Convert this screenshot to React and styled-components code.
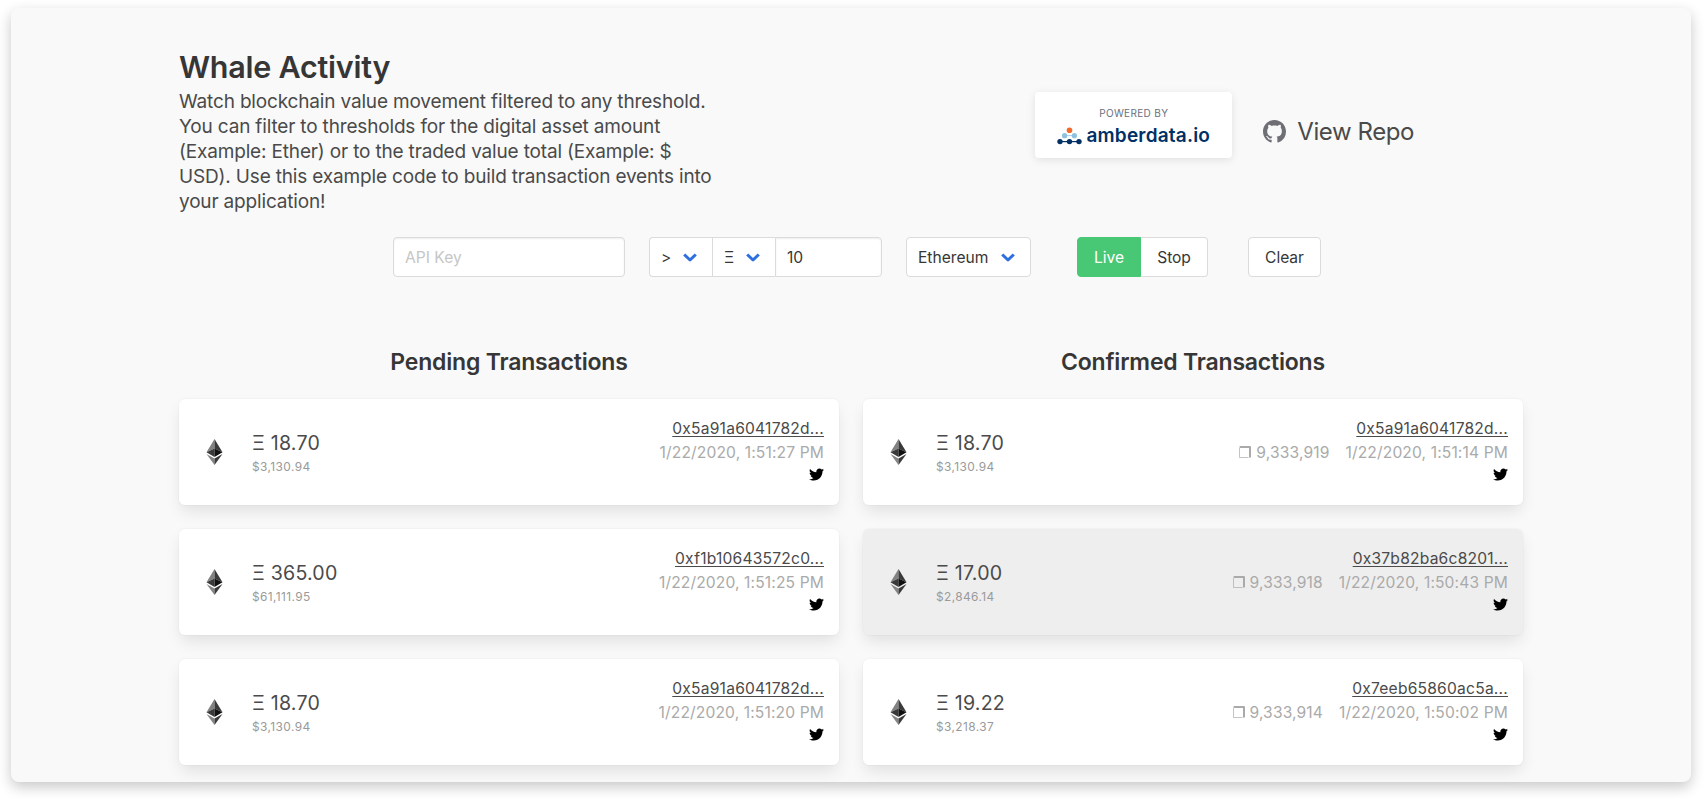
import React from 'react';
import styled, { createGlobalStyle } from 'styled-components';
import { FaTwitter } from 'react-icons/fa';

const GlobalStyle = createGlobalStyle`
  *, *::before, *::after { box-sizing: border-box; }
  body {
    margin: 0;
    background: #fff;
    color: #4a4a4a;
    font-family: Inter, 'Liberation Sans', sans-serif;
    overflow: hidden;
  }
  h1, h2, p { margin: 0; }
`;

const Page = styled.div`
  height: 798px;
  padding: 8px 13px 16px 11px;
`;

const Frame = styled.main`
  height: 774px;
  padding: 41px 168px 0;
  border-radius: 8px;
  background: #f9f9f9;
  box-shadow: 0 5px 14px rgba(0, 0, 0, 0.22);
`;

const Header = styled.header`
  display: flex;
  justify-content: space-between;
  height: 165px;
`;

const Intro = styled.div`
  width: 546px;
`;

const Title = styled.h1`
  margin-bottom: 4px;
  color: #363636;
  font-size: 30.5px;
  font-weight: 600;
  line-height: 36px;
  letter-spacing: -0.24px;
`;

const Lead = styled.p`
  font-size: 19px;
  line-height: 25px;
  letter-spacing: -0.165px;
`;

const Links = styled.div`
  display: flex;
  align-items: center;
  gap: 31px;
  height: 66px;
  margin: 43px 109px 0 0;
`;

const Badge = styled.div`
  display: flex;
  flex-direction: column;
  align-items: center;
  width: 197px;
  height: 66px;
  padding-top: 14px;
  border-radius: 4px;
  background: #fff;
  box-shadow: 0 2px 8px rgba(0, 0, 0, 0.1);
`;

const BadgeCaption = styled.span`
  color: #6b7080;
  font-size: 10px;
  line-height: 14px;
  letter-spacing: 0.35px;
`;

const Brand = styled.div`
  display: flex;
  align-items: center;
  gap: 4px;
  margin-top: 4px;
  color: #003064;
  font-size: 19px;
  font-weight: 600;
  line-height: 24px;
  letter-spacing: 0.2px;
`;

const RepoLink = styled.a`
  display: flex;
  align-items: center;
  gap: 11px;
  margin-top: 13px;
  font-size: 24px;
  line-height: 30px;
  letter-spacing: -0.42px;
  svg { color: #6e6f75; }
`;

const Controls = styled.form`
  display: flex;
  height: 40px;
  margin: 23px 0 0 214px;
  color: #363636;
  font-size: 15.6px;
`;

const Input = styled.input`
  width: ${(p) => p.$width}px;
  height: 40px;
  padding: 0 11px;
  border: 1px solid #dbdbdb;
  border-radius: ${(p) => (p.$joined ? '0 4px 4px 0' : '4px')};
  background: #fff;
  box-shadow: inset 0 1px 2px rgba(10, 10, 10, 0.07);
  color: #363636;
  font: inherit;
  &::placeholder { color: #c6c6c6; opacity: 1; }
`;

const Group = styled.div`
  display: flex;
  margin: 0 24px;
`;

const Picker = styled.div`
  display: flex;
  align-items: center;
  justify-content: space-between;
  width: ${(p) => p.$width}px;
  height: 40px;
  padding: 0 15px 0 11px;
  border: 1px solid #dbdbdb;
  border-right-width: ${(p) => (p.$joined ? 0 : '1px')};
  border-radius: ${(p) => p.$radius || '4px'};
  background: #fff;
`;

const Button = styled.button`
  width: ${(p) => p.$width}px;
  height: 40px;
  padding: 0;
  border: 1px solid ${(p) => (p.$active ? '#48c774' : '#dbdbdb')};
  border-left-width: ${(p) => (p.$joined ? 0 : '1px')};
  border-radius: ${(p) => p.$radius || '4px'};
  background: ${(p) => (p.$active ? '#48c774' : '#fff')};
  color: ${(p) => (p.$active ? '#fff' : '#363636')};
  font: inherit;
  letter-spacing: -0.05px;
`;

const Toggle = styled.div`
  display: flex;
  margin: 0 40px 0 46px;
`;

const Columns = styled.div`
  display: grid;
  grid-template-columns: 660px 660px;
  gap: 24px;
  margin-top: 70px;
`;

const Column = styled.section`
  display: flex;
  flex-direction: column;
  gap: 24px;
`;

const ColumnTitle = styled.h2`
  margin-bottom: -2px;
  color: #363636;
  font-size: 23px;
  font-weight: 600;
  line-height: 30px;
  letter-spacing: -0.19px;
  text-align: center;
`;

const Card = styled.article`
  display: flex;
  align-items: center;
  height: 106px;
  padding: 0 15px 0 26.5px;
  border-radius: 6px;
  background: ${(p) => (p.$muted ? '#eeeeee' : '#fff')};
  box-shadow: 0 8px 16px -2px rgba(10, 10, 10, 0.1), 0 0 0 1px rgba(10, 10, 10, 0.02);
`;

const Value = styled.div`
  flex: 1;
  margin-left: 29.5px;
  padding-top: 1px;
`;

const Amount = styled.div`
  font-size: 19.6px;
  line-height: 28px;
  letter-spacing: 0.2px;
`;

const Fiat = styled.div`
  color: #9a9a9a;
  font-size: 11.9px;
  line-height: 19px;
  letter-spacing: 0.4px;
`;

const Details = styled.div`
  display: flex;
  flex-direction: column;
  align-items: flex-end;
  align-self: flex-start;
  padding-top: 18px;
  font-size: 15.6px;
  line-height: 24px;
  letter-spacing: 0.13px;
`;

const Hash = styled.a`
  letter-spacing: 0.22px;
  text-decoration: underline;
  text-decoration-thickness: 1px;
  text-underline-offset: 2px;
`;

const Meta = styled.div`
  display: flex;
  gap: 16px;
  color: #aaa;
`;

const Block = styled.span`
  display: flex;
  align-items: center;
  gap: 5px;
  svg { margin-bottom: 2px; }
`;

const TwitterIcon = styled(FaTwitter)`
  margin-top: 2px;
  color: #000;
`;

const Chevron = () => (
  <svg width="14" height="9" viewBox="0 0 14 9" fill="none" stroke="#2e6fe0" strokeWidth="3" strokeLinejoin="round">
    <path d="M1.200 1.500L7 7l5.800-5.500" />
  </svg>
);

const EtherIcon = () => (
  <svg width="17" height="26" viewBox="0 0 17 26">
    <path d="M8.5 0L.5 13.2 8.5 9.6z" fill="#828282" />
    <path d="M8.5 0v9.6l8 3.6z" fill="#3a3a3a" />
    <path d="M.5 13.2l8-3.6v8.3z" fill="#393939" />
    <path d="M16.5 13.2l-8-3.6v8.3z" fill="#101010" />
    <path d="M.5 14.9l8 4.7V26z" fill="#858585" />
    <path d="M16.5 14.9l-8 4.7V26z" fill="#3a3a3a" />
  </svg>
);

const BlockIcon = () => (
  <svg width="12" height="12" viewBox="0 0 12 12" fill="none" stroke="currentColor">
    <path d="M.5 2v9.500h9" strokeWidth="0.7" />
    <path d="M.6 1H11V11.400" strokeWidth="2" strokeLinejoin="round" />
  </svg>
);

const GithubIcon = () => (
  <svg width="23" height="23" viewBox="0 0 16 16" fill="currentColor">
    <path d="M8 0C3.58 0 0 3.58 0 8c0 3.54 2.29 6.53 5.47 7.59.4.07.55-.17.55-.38 0-.19-.01-.82-.01-1.49-2.01.37-2.53-.49-2.69-.94-.09-.23-.48-.94-.82-1.13-.28-.15-.68-.52-.01-.53.63-.01 1.08.58 1.23.82.72 1.21 1.87.87 2.33.66.07-.52.28-.87.51-1.07-1.78-.2-3.64-.89-3.64-3.95 0-.87.31-1.59.82-2.15-.08-.2-.36-1.02.08-2.12 0 0 .67-.21 2.2.82.64-.18 1.32-.27 2-.27.68 0 1.36.09 2 .27 1.53-1.04 2.2-.82 2.2-.82.44 1.1.16 1.92.08 2.12.51.56.82 1.27.82 2.15 0 3.07-1.87 3.75-3.65 3.95.29.25.54.73.54 1.48 0 1.07-.01 1.93-.01 2.2 0 .21.15.46.55.38A8.012 8.012 0 0 0 16 8c0-4.42-3.58-8-8-8z" />
  </svg>
);

const BrandIcon = () => (
  <svg width="25" height="18" viewBox="0 0 25 18">
    <path d="M7.500 8.600h10" stroke="#8fc3dd" strokeWidth="0.8" />
    <path d="M3 14.600h19" stroke="#003064" strokeWidth="1.200" />
    <circle cx="12.500" cy="3.300" r="2.800" fill="#f26a2a" />
    <circle cx="7.600" cy="8.700" r="2.600" fill="#8fc3dd" />
    <circle cx="17.400" cy="8.700" r="2.600" fill="#8fc3dd" />
    <circle cx="3" cy="14.600" r="2.700" fill="#003064" />
    <circle cx="12.500" cy="14.600" r="2.700" fill="#003064" />
    <circle cx="22" cy="14.600" r="2.700" fill="#003064" />
  </svg>
);

const pending = [
  { amount: '18.70', fiat: '$3,130.94', hash: '0x5a91a6041782d...', time: '1/22/2020, 1:51:27 PM' },
  { amount: '365.00', fiat: '$61,111.95', hash: '0xf1b10643572c0...', time: '1/22/2020, 1:51:25 PM' },
  { amount: '18.70', fiat: '$3,130.94', hash: '0x5a91a6041782d...', time: '1/22/2020, 1:51:20 PM' },
];

const confirmed = [
  { amount: '18.70', fiat: '$3,130.94', hash: '0x5a91a6041782d...', time: '1/22/2020, 1:51:14 PM', block: '9,333,919' },
  { amount: '17.00', fiat: '$2,846.14', hash: '0x37b82ba6c8201...', time: '1/22/2020, 1:50:43 PM', block: '9,333,918', muted: true },
  { amount: '19.22', fiat: '$3,218.37', hash: '0x7eeb65860ac5a...', time: '1/22/2020, 1:50:02 PM', block: '9,333,914' },
];

const Transaction = ({ tx }) => (
  <Card $muted={tx.muted}>
    <EtherIcon />
    <Value>
      <Amount>Ξ {tx.amount}</Amount>
      <Fiat>{tx.fiat}</Fiat>
    </Value>
    <Details>
      <Hash>{tx.hash}</Hash>
      <Meta>
        {tx.block && <Block><BlockIcon />{tx.block}</Block>}
        <span>{tx.time}</span>
      </Meta>
      <TwitterIcon size={15} />
    </Details>
  </Card>
);

const TransactionList = ({ title, items }) => (
  <Column>
    <ColumnTitle>{title}</ColumnTitle>
    {items.map((tx) => <Transaction key={tx.time} tx={tx} />)}
  </Column>
);

export default function App() {
  return (
    <Page>
      <GlobalStyle />
      <Frame>
        <Header>
          <Intro>
            <Title>Whale Activity</Title>
            <Lead>
              Watch blockchain value movement filtered to any threshold. You can filter to
              thresholds for the digital asset amount (Example: Ether) or to the traded value
              total (Example: $ USD). Use this example code to build transaction events into
              your application!
            </Lead>
          </Intro>
          <Links>
            <Badge>
              <BadgeCaption>POWERED BY</BadgeCaption>
              <Brand><BrandIcon />amberdata.io</Brand>
            </Badge>
            <RepoLink><GithubIcon />View Repo</RepoLink>
          </Links>
        </Header>
        <Controls>
          <Input $width={232} placeholder="API Key" />
          <Group>
            <Picker $width={63} $joined $radius="4px 0 0 4px">&gt;<Chevron /></Picker>
            <Picker $width={63} $joined $radius="0">Ξ<Chevron /></Picker>
            <Input $width={107} $joined defaultValue="10" />
          </Group>
          <Picker $width={125}>Ethereum<Chevron /></Picker>
          <Toggle>
            <Button type="button" $width={64} $active $radius="4px 0 0 4px">Live</Button>
            <Button type="button" $width={67} $joined $radius="0 4px 4px 0">Stop</Button>
          </Toggle>
          <Button type="button" $width={73}>Clear</Button>
        </Controls>
        <Columns>
          <TransactionList title="Pending Transactions" items={pending} />
          <TransactionList title="Confirmed Transactions" items={confirmed} />
        </Columns>
      </Frame>
    </Page>
  );
}
